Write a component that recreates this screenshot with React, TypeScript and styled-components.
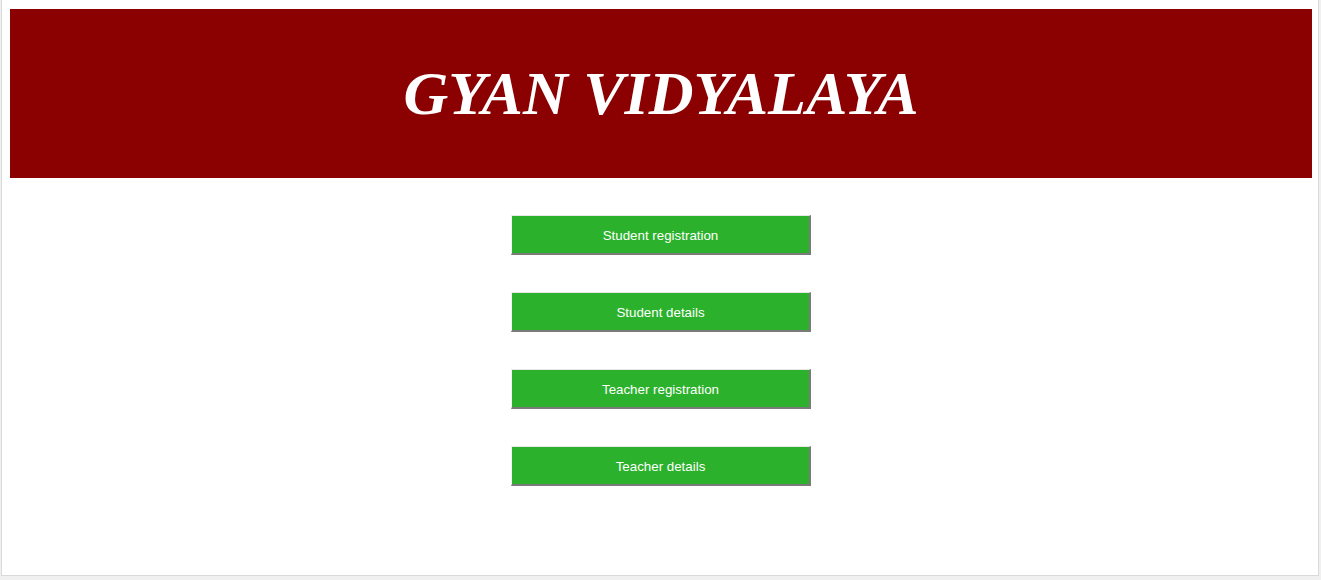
import React from "react";
import styled, { createGlobalStyle } from "styled-components";

const Global = createGlobalStyle`
  html, body { margin: 0; padding: 0; background: #f0f0f0; }
  body { font-family: "Liberation Sans", Arial, sans-serif; }
`;

const Frame = styled.div`
  margin-left: 1px;
  width: 1318px;
  height: 576px;
  box-sizing: border-box;
  background: #ffffff;
  border-left: 1px solid #dadada;
  border-right: 1px solid #dadada;
  border-bottom: 1px solid #dadada;
  padding: 9px 6px 0 8px;
`;

const Header = styled.header`
  height: 169px;
  background: #8b0000;
  display: flex;
  align-items: center;
  justify-content: center;
`;

const Title = styled.h1`
  margin: 0;
  color: #ffffff;
  font-family: "Liberation Serif", "Times New Roman", serif;
  font-style: italic;
  font-weight: bold;
  font-size: 62px;
  line-height: 1;
  padding-bottom: 2px;
`;

const Menu = styled.nav`
  display: flex;
  flex-direction: column;
  align-items: center;
  gap: 37px;
  padding-top: 37px;
`;

const MenuButton = styled.button`
  width: 300px;
  height: 40px;
  box-sizing: border-box;
  background: #2bb12b;
  color: #ffffff;
  font-family: "Liberation Sans", Arial, sans-serif;
  font-size: 13.33px;
  border-style: solid;
  border-width: 1px 2px 2px 1px;
  border-color: #e8e8e8 #7a7a7a #7a7a7a #f4f4f4;
  cursor: pointer;
  padding: 2px 0 0 0;
`;

const items = ["Student registration", "Student details", "Teacher registration", "Teacher details"];

export default function App() {
  return (
    <>
      <Global />
      <Frame>
        <Header>
          <Title>GYAN VIDYALAYA</Title>
        </Header>
        <Menu>
          {items.map((t) => (
            <MenuButton key={t}>{t}</MenuButton>
          ))}
        </Menu>
      </Frame>
    </>
  );
}
